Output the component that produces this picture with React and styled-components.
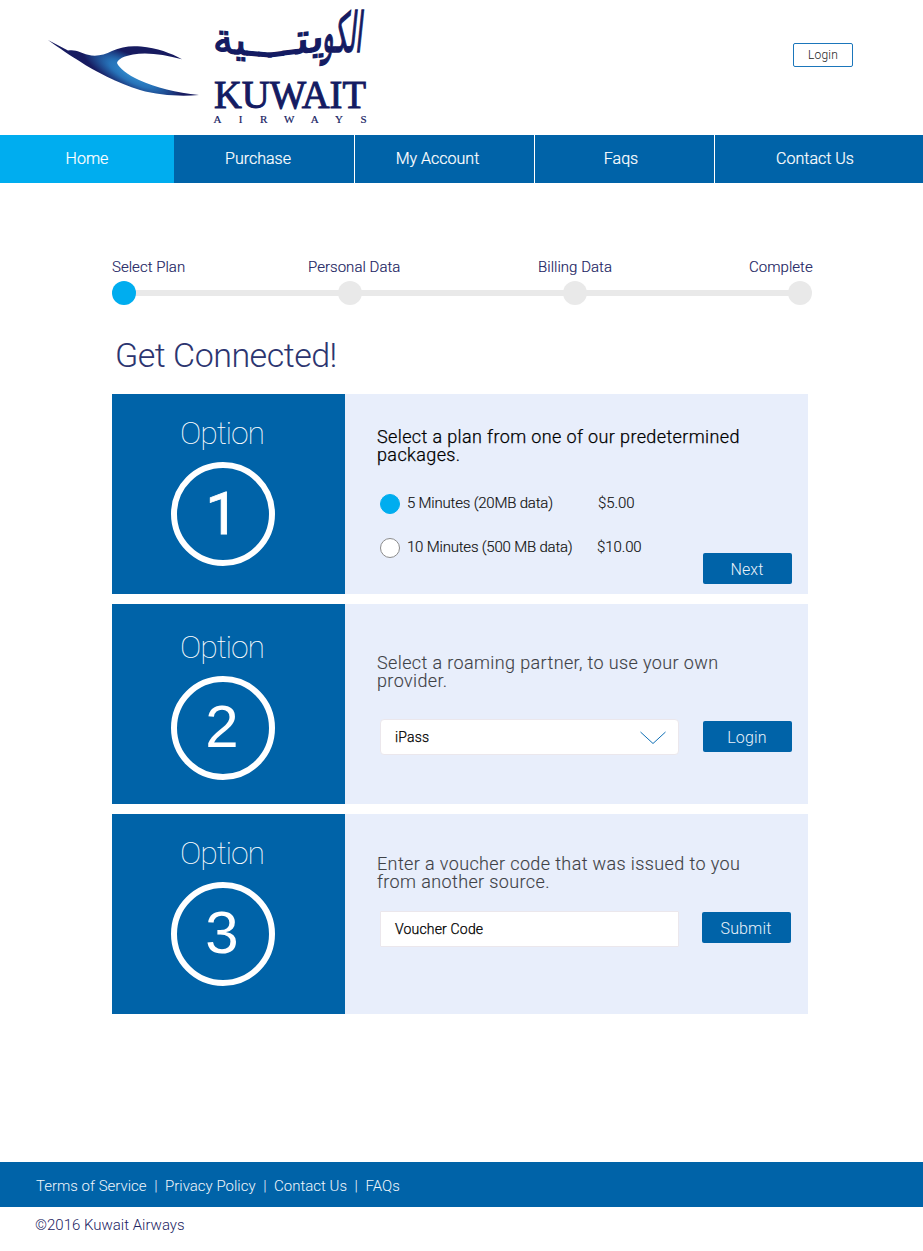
import React from 'react';
import styled, { createGlobalStyle } from 'styled-components';

const GlobalStyle = createGlobalStyle`
  * { box-sizing: border-box; }
  body { margin: 0; background: #fff; font-family: Roboto, "Liberation Sans", sans-serif; font-weight: 300; }
  button { font: inherit; }
`;

const Page = styled.div`
  width: 923px;
  height: 1251px;
  display: flex;
  flex-direction: column;
  overflow: hidden;
`;

const Header = styled.header`
  height: 135px;
  display: flex;
  justify-content: space-between;
  align-items: flex-start;
  padding: 0 70px 0 40px;
`;

const HeaderLogin = styled.button`
  width: 60px;
  height: 24px;
  margin-top: 43px;
  padding: 0 0 1px;
  border: 1px solid #1b76bb;
  border-radius: 2px;
  background: #fff;
  color: #222;
  font-size: 12px;
  letter-spacing: 0.2px;
`;

const Nav = styled.nav`
  height: 48px;
  display: flex;
`;

const NavItem = styled.a`
  width: ${(p) => p.$width}px;
  padding: 0 ${(p) => p.$shift}px 1px 0;
  display: flex;
  flex: none;
  align-items: center;
  justify-content: center;
  background: ${(p) => (p.$active ? '#00adef' : '#0063a8')};
  border-left: ${(p) => (p.$divided ? 1 : 0)}px solid #fff;
  color: #fff;
  font-size: 16px;
  font-weight: 300;
  -webkit-text-stroke: 0.2px currentColor;
`;

const Steps = styled.section`
  width: 702px;
  margin: 74px 0 0 112px;
`;

const StepLabels = styled.div`
  display: flex;
  color: #1b2362;
  font-size: 15px;
  line-height: 20px;
  letter-spacing: 0.03px;
  -webkit-text-stroke: 0.15px currentColor;
`;

const StepLabel = styled.span`
  width: ${(p) => p.$width}px;
  white-space: nowrap;
`;

const Track = styled.div`
  width: 700px;
  height: 24px;
  margin-top: 4px;
  display: grid;
  grid-template-columns: 226px 225px 225px 24px;
  background: linear-gradient(#e9e9e9, #e9e9e9) 12px 9px / 676px 6px no-repeat;
`;

const Dot = styled.span`
  width: 24px;
  height: 24px;
  border-radius: 50%;
  background: ${(p) => (p.$active ? '#00adef' : '#e9e9e9')};
`;

const Title = styled.h1`
  margin: 30px 0 19px 115px;
  color: #2c3570;
  font-size: 34px;
  font-weight: 300;
  line-height: 40px;
  letter-spacing: -0.5px;
  white-space: nowrap;
`;

const Cards = styled.main`
  width: 696px;
  margin-left: 112px;
  display: flex;
  flex-direction: column;
  gap: 10px;
`;

const Card = styled.section`
  height: 200px;
  display: flex;
  background: #e8eefb;
`;

const OptionPanel = styled.div`
  width: 233px;
  padding: ${(p) => p.$top}px 11px 0 0;
  display: flex;
  flex-direction: column;
  align-items: center;
  background: #0063a8;
  color: #fff;
`;

const OptionLabel = styled.span`
  padding-right: 2px;
  font-size: 32px;
  font-weight: 100;
  line-height: 40px;
  letter-spacing: -1.15px;
`;

const Circle = styled.span`
  width: 104px;
  height: 104px;
  margin-top: 9px;
  padding: 0 2px ${(p) => p.$lift || 0}px 0;
  border: 6px solid #fff;
  border-radius: 50%;
  display: flex;
  align-items: center;
  justify-content: center;
  font-family: ${(p) => (p.$plain ? 'Roboto' : '"Liberation Sans"')}, sans-serif;
  font-size: 60px;
  font-weight: 400;
  line-height: 60px;
  -webkit-text-stroke: ${(p) => (p.$plain ? 0.8 : 0)}px #fff;
`;

const Body = styled.div`
  flex: 1;
  padding: ${(p) => p.$top}px 16px 0 32px;
`;

const Lead = styled.p`
  margin: 0;
  color: ${(p) => (p.$strong ? '#000' : '#3f4247')};
  font-size: 18px;
  font-weight: 300;
  line-height: 18px;
  letter-spacing: 0.38px;
  white-space: nowrap;
  -webkit-text-stroke: ${(p) => (p.$strong ? 0.25 : 0.12)}px currentColor;
`;

const Plans = styled.div`
  margin: 30px 0 0 3px;
  display: flex;
  flex-direction: column;
  gap: 24px;
`;

const Plan = styled.label`
  height: 20px;
  display: flex;
  align-items: center;
  color: #111;
  font-size: 15px;
  letter-spacing: -0.2px;
  -webkit-text-stroke: 0.15px currentColor;
`;

const Radio = styled.span`
  width: 20px;
  height: 20px;
  margin-right: 7px;
  border: 1px solid ${(p) => (p.$checked ? '#00adef' : '#8c8c8c')};
  border-radius: 50%;
  background: ${(p) => (p.$checked ? '#00adef' : '#fff')};
`;

const PlanName = styled.span`
  width: ${(p) => p.$width}px;
  padding-bottom: 2px;
  white-space: nowrap;
`;

const Price = styled.span`
  padding-bottom: 2px;
  letter-spacing: -0.1px;
`;

const NextRow = styled.div`
  margin-top: -5px;
  display: flex;
  justify-content: flex-end;
`;

const FormRow = styled.div`
  margin-top: ${(p) => p.$top}px;
  padding-left: 3px;
  padding-right: ${(p) => p.$inset || 0}px;
  display: flex;
  justify-content: space-between;
  align-items: flex-start;
`;

const Field = styled.div`
  width: 299px;
  height: 36px;
  padding: 0 12px 0 14px;
  display: flex;
  align-items: center;
  justify-content: space-between;
  background: #fff;
  border: 1px solid #ebe7ec;
  border-radius: ${(p) => p.$radius}px;
  color: #000;
  font-size: 14px;
  letter-spacing: 0.18px;
  -webkit-text-stroke: 0.25px currentColor;
`;

const Action = styled.button`
  width: 89px;
  height: 31px;
  margin-top: ${(p) => p.$top || 0}px;
  padding: 2px 1px 0 0;
  border: 0;
  border-radius: 2px;
  background: #0063a8;
  color: #e9f2fa;
  font-size: 16px;
  font-weight: 300;
  letter-spacing: 0.15px;
`;

const Footer = styled.footer`
  margin-top: 148px;
  height: 45px;
  padding: 3px 0 0 36px;
  display: flex;
  align-items: center;
  gap: 7.6px;
  background: #0063a8;
  color: #f0f6fb;
  font-size: 15px;
`;

const Copyright = styled.div`
  padding: 8px 0 0 35px;
  color: #1b2362;
  font-size: 15px;
  line-height: 20px;
`;

function Logo() {
  return (
    <svg width="340" height="135" viewBox="40 0 340 135" role="img" aria-label="Kuwait Airways">
      <defs>
        <radialGradient id="wing" gradientUnits="userSpaceOnUse" cx="0" cy="0" r="1" gradientTransform="translate(132 74) rotate(28) scale(56 17)">
          <stop offset="0" stopColor="#3391d2" />
          <stop offset=".45" stopColor="#2672b8" />
          <stop offset="1" stopColor="#171b60" />
        </radialGradient>
      </defs>
      <path
        d="M48 40 L68 50.5 C76 49 81 53 88 54.8 C96 57 104 55 112 51 C121 46.5 131 45.5 141 46.5 C157 48 171 53 182 59.3 C164 54.5 147 52 133 54.5 C124 56 118 59 117 63 C119 68 128 75 139 80 C156 88 176 92.5 199 95 C181 96.500 159 95.5 140 90 C118 83 94 71 80 61.5 C71 56 59 48 48 40Z"
        fill="url(#wing)"
      />
      <g fill="#141b62" stroke="#141b62" fontFamily="'DejaVu Sans', sans-serif" direction="rtl">
        <text transform="translate(362 52) skewX(-6) scale(1 1.15)" strokeWidth="1.3" fontSize="48" textLength="40" lengthAdjust="spacingAndGlyphs">
          الكو
        </text>
        <text transform="translate(325 50) skewY(-7)" strokeWidth="1.3" fontSize="42" textLength="56" lengthAdjust="spacingAndGlyphs">
          يتــ
        </text>
        <text transform="translate(270 56.800) skewY(5)" strokeWidth="1.3" fontSize="42" textLength="57" lengthAdjust="spacingAndGlyphs">
          ــية
        </text>
      </g>
      <text x="214" y="107.5" fill="#141b62" stroke="#141b62" strokeWidth="1" fontFamily="'Liberation Serif', serif" fontSize="40" textLength="152" lengthAdjust="spacingAndGlyphs">
        KUWAIT
      </text>
      <text x="213.5" y="123" fill="#141b62" stroke="#141b62" strokeWidth=".2" fontFamily="'Liberation Serif', serif" fontSize="11" textLength="153" lengthAdjust="spacing">
        AIRWAYS
      </text>
    </svg>
  );
}

function Chevron() {
  return (
    <svg width="26" height="14" viewBox="0 0 26 14" fill="none" stroke="#0f6fb5">
      <path d="M.5 2 L13 13.5 L25.5 2" />
    </svg>
  );
}

function NavBar() {
  return (
    <Nav>
      <NavItem $width={174} $shift={0} $active>Home</NavItem>
      <NavItem $width={180} $shift={12}>Purchase</NavItem>
      <NavItem $width={180} $shift={14} $divided>My Account</NavItem>
      <NavItem $width={180} $shift={7} $divided>Faqs</NavItem>
      <NavItem $width={209} $shift={8} $divided>Contact Us</NavItem>
    </Nav>
  );
}

export default function App() {
  return (
    <Page>
      <GlobalStyle />
      <Header>
        <Logo />
        <HeaderLogin>Login</HeaderLogin>
      </Header>
      <NavBar />
      <Steps>
        <StepLabels>
          <StepLabel $width={196}>Select Plan</StepLabel>
          <StepLabel $width={230}>Personal Data</StepLabel>
          <StepLabel $width={211}>Billing Data</StepLabel>
          <StepLabel $width={65}>Complete</StepLabel>
        </StepLabels>
        <Track>
          <Dot $active />
          <Dot />
          <Dot />
          <Dot />
        </Track>
      </Steps>
      <Title>Get Connected!</Title>
      <Cards>
        <Card>
          <OptionPanel $top={19}>
            <OptionLabel>Option</OptionLabel>
            <Circle $plain>1</Circle>
          </OptionPanel>
          <Body $top={34}>
            <Lead $strong>
              Select a plan from one of our predetermined
              <br />
              packages.
            </Lead>
            <Plans>
              <Plan>
                <Radio $checked />
                <PlanName $width={191}>5 Minutes (20MB data)</PlanName>
                <Price>$5.00</Price>
              </Plan>
              <Plan>
                <Radio />
                <PlanName $width={190}>10 Minutes (500 MB data)</PlanName>
                <Price>$10.00</Price>
              </Plan>
            </Plans>
            <NextRow>
              <Action>Next</Action>
            </NextRow>
          </Body>
        </Card>
        <Card>
          <OptionPanel $top={23}>
            <OptionLabel>Option</OptionLabel>
            <Circle $lift={2}>2</Circle>
          </OptionPanel>
          <Body $top={50}>
            <Lead>
              Select a roaming partner, to use your own
              <br />
              provider.
            </Lead>
            <FormRow $top={29}>
              <Field $radius={4}>
                iPass
                <Chevron />
              </Field>
              <Action $top={2}>Login</Action>
            </FormRow>
          </Body>
        </Card>
        <Card>
          <OptionPanel $top={19}>
            <OptionLabel>Option</OptionLabel>
            <Circle $lift={2}>3</Circle>
          </OptionPanel>
          <Body $top={41}>
            <Lead>
              Enter a voucher code that was issued to you
              <br />
              from another source.
            </Lead>
            <FormRow $top={20} $inset={1}>
              <Field $radius={1}>Voucher Code</Field>
              <Action $top={1}>Submit</Action>
            </FormRow>
          </Body>
        </Card>
      </Cards>
      <Footer>
        <span>Terms of Service</span>
        <span>|</span>
        <span>Privacy Policy</span>
        <span>|</span>
        <span>Contact Us</span>
        <span>|</span>
        <span>FAQs</span>
      </Footer>
      <Copyright>©2016 Kuwait Airways</Copyright>
    </Page>
  );
}
